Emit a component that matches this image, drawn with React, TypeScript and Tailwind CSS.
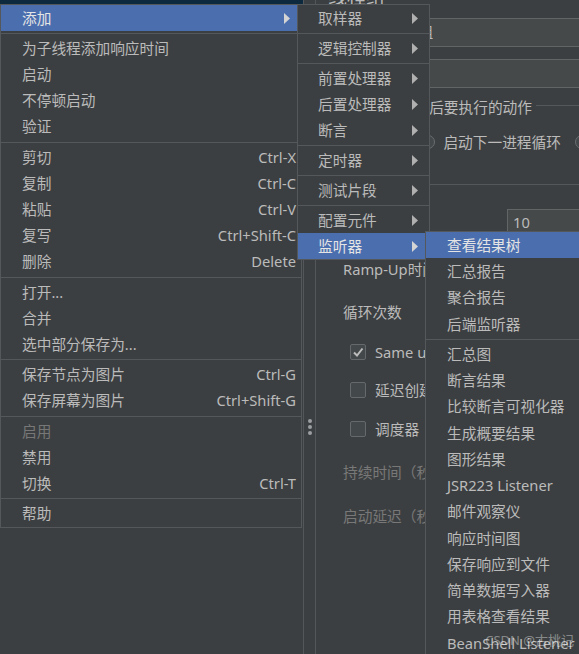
import React from "react";

type Row = { label: string; shortcut?: string; sub?: boolean; sel?: boolean; dis?: boolean } | "sep";

const mainItems: Row[] = [
  { label: "添加", sub: true, sel: true },
  "sep",
  { label: "为子线程添加响应时间" },
  { label: "启动" },
  { label: "不停顿启动" },
  { label: "验证" },
  "sep",
  { label: "剪切", shortcut: "Ctrl-X" },
  { label: "复制", shortcut: "Ctrl-C" },
  { label: "粘贴", shortcut: "Ctrl-V" },
  { label: "复写", shortcut: "Ctrl+Shift-C" },
  { label: "删除", shortcut: "Delete" },
  "sep",
  { label: "打开..." },
  { label: "合并" },
  { label: "选中部分保存为..." },
  "sep",
  { label: "保存节点为图片", shortcut: "Ctrl-G" },
  { label: "保存屏幕为图片", shortcut: "Ctrl+Shift-G" },
  "sep",
  { label: "启用", dis: true },
  { label: "禁用" },
  { label: "切换", shortcut: "Ctrl-T" },
  "sep",
  { label: "帮助" },
];

const sub1Items: Row[] = [
  { label: "取样器", sub: true },
  "sep",
  { label: "逻辑控制器", sub: true },
  "sep",
  { label: "前置处理器", sub: true },
  { label: "后置处理器", sub: true },
  { label: "断言", sub: true },
  "sep",
  { label: "定时器", sub: true },
  "sep",
  { label: "测试片段", sub: true },
  "sep",
  { label: "配置元件", sub: true },
  { label: "监听器", sub: true, sel: true },
];

const sub2Items: Row[] = [
  { label: "查看结果树", sel: true },
  { label: "汇总报告" },
  { label: "聚合报告" },
  { label: "后端监听器" },
  "sep",
  { label: "汇总图" },
  { label: "断言结果" },
  { label: "比较断言可视化器" },
  { label: "生成概要结果" },
  { label: "图形结果" },
  { label: "JSR223 Listener" },
  { label: "邮件观察仪" },
  { label: "响应时间图" },
  { label: "保存响应到文件" },
  { label: "简单数据写入器" },
  { label: "用表格查看结果" },
  { label: "BeanShell Listener" },
];

function Arrow({ sel }: { sel?: boolean }) {
  return (
    <svg width="6" height="11" viewBox="0 0 6 11" className="shrink-0">
      <polygon points="0,0 6,5.5 0,11" fill={sel ? "#d4d4d4" : "#b0b0b0"} />
    </svg>
  );
}

function Sep() {
  return (
    <div className="h-[4px] pt-[2px] shrink-0">
      <div className="h-px bg-[#55585a]" />
    </div>
  );
}

function MenuRows({ items, rowClass, padClass }: { items: Row[]; rowClass: string; padClass: string }) {
  return (
    <>
      {items.map((it, i) =>
        it === "sep" ? (
          <Sep key={i} />
        ) : (
          <div
            key={i}
            className={`${rowClass} ${padClass} shrink-0 flex items-center whitespace-nowrap ${
              it.sel ? "bg-[#4b6eaf] text-[#e4e4e4]" : it.dis ? "text-[#777777]" : "text-[#bbbbbb]"
            }`}
          >
            <span className="leading-none">{it.label}</span>
            <span className="flex-1" />
            {it.shortcut && <span className="leading-none text-[#bbbbbb] pr-[5px]">{it.shortcut}</span>}
            {it.sub && (
              <span className="pr-[11px] flex items-center">
                <Arrow sel={it.sel} />
              </span>
            )}
          </div>
        )
      )}
    </>
  );
}

function Field({ text, className }: { text?: string; className: string }) {
  return (
    <div className={`${className} bg-[#45494a] border border-[#626566] flex items-center whitespace-nowrap`}>
      {text}
    </div>
  );
}

function Check({ checked }: { checked?: boolean }) {
  return (
    <div className="w-[16px] h-[16px] shrink-0 rounded-[2px] border border-[#65696b] bg-[#43484a] flex items-center justify-center">
      {checked && (
        <svg width="12" height="12" viewBox="0 0 12 12">
          <polyline points="2,6.5 5,9.5 10.5,2.5" fill="none" stroke="#bcbcbc" strokeWidth="2" />
        </svg>
      )}
    </div>
  );
}

function Radio() {
  return <div className="w-[14px] h-[14px] shrink-0 rounded-full border border-[#6b6e70] bg-[#43484a]" />;
}

export default function App() {
  return (
    <div className="relative w-[579px] h-[654px] overflow-hidden bg-[#3c3f41] flex text-[14.7px] text-[#bbbbbb] font-['Noto_Sans','Noto_Sans_CJK_SC',sans-serif]">
      {/* left tree panel */}
      <div className="w-[303px] shrink-0 flex flex-col">
        <div className="h-[4px] bg-[#0d293e]" />
      </div>
      <div className="w-px shrink-0 bg-[#54575a]" />
      {/* splitter */}
      <div className="w-[11px] shrink-0 flex flex-col items-center pt-[419px] gap-[2px]">
        <div className="w-[4px] h-[4px] rounded-full bg-[#9c9fa1]" />
        <div className="w-[4px] h-[4px] rounded-full bg-[#9c9fa1]" />
        <div className="w-[4px] h-[4px] rounded-full bg-[#9c9fa1]" />
      </div>
      <div className="w-px shrink-0 bg-[#54575a]" />
      {/* right panel */}
      <div className="flex-1 min-w-0 flex flex-col whitespace-nowrap">
        <div className="h-[18px] overflow-hidden shrink-0">
          <div className="ml-[12px] -mt-[13px] text-[19px] leading-[20px]">线程组</div>
        </div>
        <div className="h-[29px] flex shrink-0">
          <Field text="线程组" className="ml-[66px] flex-1 -mr-[10px] pl-[6px]" />
        </div>
        <div className="mt-[12px] h-[29px] flex shrink-0">
          <Field className="ml-[66px] flex-1 -mr-[10px]" />
        </div>
        <div className="mt-[10px] h-[18px] flex items-center shrink-0">
          <span className="ml-[25px] leading-none">在取样器错误后要执行的动作</span>
          <div className="ml-[4px] flex-1 h-px bg-[#55585a] -mt-[4px]" />
        </div>
        <div className="mt-[17px] h-[18px] flex items-center shrink-0">
          <div className="ml-[39px]">
            <Radio />
          </div>
          <span className="ml-[8px] leading-none">继续</span>
          <div className="ml-[15px]">
            <Radio />
          </div>
          <span className="ml-[8px] leading-none">启动下一进程循环</span>
          <div className="ml-[14px]">
            <Radio />
          </div>
          <span className="ml-[8px] leading-none">停止线程</span>
        </div>
        <div className="mt-[33px] h-px ml-[14px] bg-[#55585a] shrink-0" />
        <div className="mt-[24px] h-[26px] flex shrink-0">
          <Field text="10" className="ml-[191px] flex-1 -mr-[10px] pl-[5px]" />
        </div>
        <div className="mt-[25px] h-[18px] flex items-center shrink-0">
          <span className="ml-[27px] leading-none">Ramp-Up时间（秒）：</span>
        </div>
        <div className="mt-[25px] h-[18px] flex items-center shrink-0">
          <span className="ml-[27px] leading-none">循环次数</span>
        </div>
        <div className="mt-[22px] h-[18px] flex items-center shrink-0">
          <div className="ml-[34px]">
            <Check checked />
          </div>
          <span className="ml-[9px] leading-none">Same user on each iteration</span>
        </div>
        <div className="mt-[20px] h-[18px] flex items-center shrink-0">
          <div className="ml-[34px]">
            <Check />
          </div>
          <span className="ml-[9px] leading-none">延迟创建线程直到需要</span>
        </div>
        <div className="mt-[21px] h-[18px] flex items-center shrink-0">
          <div className="ml-[34px]">
            <Check />
          </div>
          <span className="ml-[9px] leading-none">调度器</span>
        </div>
        <div className="mt-[25px] h-[18px] flex items-center shrink-0 text-[#787878]">
          <span className="ml-[27px] leading-none">持续时间（秒）</span>
        </div>
        <div className="mt-[26px] h-[18px] flex items-center shrink-0 text-[#787878]">
          <span className="ml-[27px] leading-none">启动延迟（秒）</span>
        </div>
      </div>

      {/* main popup menu */}
      <div className="absolute left-0 top-[4px] w-[302px] border border-[#55585a] bg-[#3c3f41] flex flex-col">
        <MenuRows items={mainItems} rowClass="h-[26.2px]" padClass="pl-[21px]" />
      </div>
      {/* submenu 1 */}
      <div className="absolute left-[297px] top-[4px] w-[133px] border border-[#55585a] bg-[#3c3f41] flex flex-col">
        <MenuRows items={sub1Items} rowClass="h-[26px]" padClass="pl-[20px]" />
      </div>
      {/* submenu 2 */}
      <div className="absolute left-[425px] top-[231px] w-[200px] border border-[#55585a] bg-[#3c3f41] flex flex-col">
        <MenuRows items={sub2Items} rowClass="h-[26.25px]" padClass="pl-[21px]" />
      </div>
      {/* watermark */}
      <div className="absolute right-[5px] top-[634px] text-[13px] leading-none text-white/40 whitespace-nowrap">
        CSDN @古桃记
      </div>
    </div>
  );
}
